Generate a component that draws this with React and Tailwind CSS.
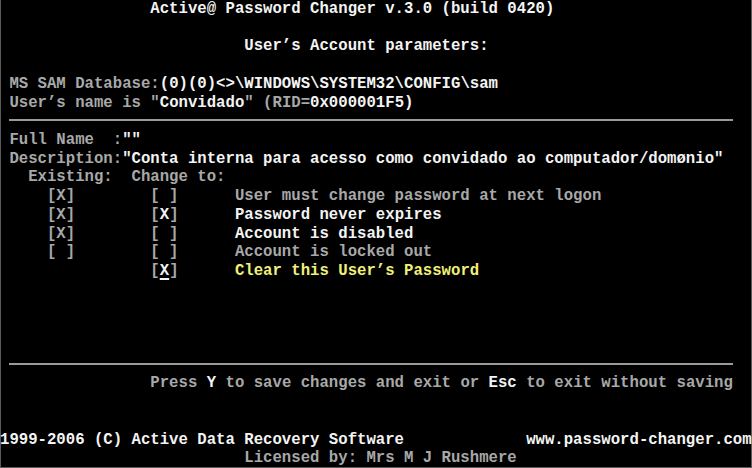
import React from "react";

const G = "text-[#a8a8a8]";
const W = "text-[#f4f4f4]";
const Y = "text-[#f0f07a]";

const rows = [
  [[W, "                Active@ Password Changer v.3.0 (build 0420)"]],
  [],
  [[W, "                          User’s Account parameters:"]],
  [],
  [[G, " MS SAM Database:"], [W, "(0)(0)<>\\WINDOWS\\SYSTEM32\\CONFIG\\sam"]],
  [[G, " User’s name is \""], [W, "Convidado"], [G, "\" (RID="], [W, "0x000001F5)"]],
  "hr",
  [[G, " Full Name  :"], [W, "\"\""]],
  [[G, " Description:"], [W, "\"Conta interna para acesso como convidado ao computador/domønio\""]],
  [[G, "   Existing:  Change to:"]],
  [[G, "     [X]        [ ]      User must change password at next logon"]],
  [[G, "     [X]        ["], [W, "X"], [G, "]      "], [W, "Password never expires"]],
  [[G, "     [X]        [ ]      "], [W, "Account is disabled"]],
  [[G, "     [ ]        [ ]      Account is locked out"]],
  [[G, "                ["], ["cursor", "X"], [G, "]      "], [Y, "Clear this User’s Password"]],
  [],
  [],
  [],
  [],
  "hr",
  [[G, "                Press "], [W, "Y"], [G, " to save changes and exit or "], [W, "Esc"], [G, " to exit without saving"]],
  [],
  [],
  [[W, "1999-2006 (C) Active Data Recovery Software             www.password-changer.com"]],
  [[G, "                          Licensed by: Mrs M J Rushmere"]],
];

export default function App() {
  return (
    <div
      className="w-[752px] h-[468px] bg-black overflow-hidden flex flex-col shadow-[inset_1px_0_0_#5a5a5a,inset_-1px_0_0_#5a5a5a,inset_0_-1px_0_#5a5a5a]"
      style={{ fontFamily: '"Liberation Mono", "DejaVu Sans Mono", monospace' }}
    >
      {rows.map((row, i) =>
        row === "hr" ? (
          <div key={i} className="h-[18.72px] shrink-0 pt-[7px] pl-[9.4px]">
            <div className="w-[724px] h-[2px] bg-[#9a9a9a]" />
          </div>
        ) : (
          <div
            key={i}
            className="h-[18.72px] shrink-0 whitespace-pre text-[15.664px] leading-[18.72px] font-bold"
          >
            {row.map(([c, t], j) =>
              c === "cursor" ? (
                <span
                  key={j}
                  className="text-[#f4f4f4] underline decoration-2 underline-offset-[3px] decoration-[#f4f4f4]"
                >
                  {t}
                </span>
              ) : (
                <span key={j} className={c}>
                  {t}
                </span>
              )
            )}
          </div>
        )
      )}
    </div>
  );
}
